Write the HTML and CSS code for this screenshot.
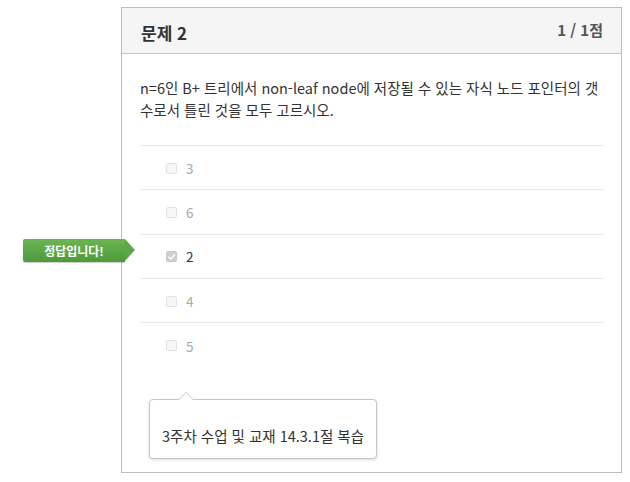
FILE: index.html
```html
<!DOCTYPE html>
<html lang="ko">
<head>
<meta charset="utf-8">
<link rel="stylesheet" href="styles.css">
</head>
<body>
<div class="page">
  <div class="card">
    <div class="card-header">
      <h2 class="title">문제 2</h2>
      <span class="score">1 / 1점</span>
    </div>
    <div class="card-body">
      <p class="question">n=6인 B+ 트리에서 non-leaf node에 저장될 수 있는 자식 노드 포인터의 갯수로서 틀린 것을 모두 고르시오.</p>
      <ul class="options">
        <li class="option"><span class="box"></span><span class="label">3</span></li>
        <li class="option"><span class="box"></span><span class="label">6</span></li>
        <li class="option selected"><span class="box checked"><svg width="10" height="10" viewBox="0 0 10 10"><path d="M2 5.2 L4.2 7.3 L8.2 2.6" fill="none" stroke="#fff" stroke-width="1.6" stroke-linecap="round" stroke-linejoin="round"/></svg></span><span class="label">2</span>
          <div class="badge">정답입니다!</div>
        </li>
        <li class="option"><span class="box"></span><span class="label">4</span></li>
        <li class="option"><span class="box"></span><span class="label">5</span></li>
      </ul>
      <div class="tooltip">3주차 수업 및 교재 14.3.1절 복습</div>
    </div>
  </div>
</div>
</body>
</html>
```

FILE: styles.css
```css
* { box-sizing: border-box; }
html, body { margin: 0; padding: 0; background: #fff; }
body { font-family: "Noto Sans CJK KR", "Noto Sans", sans-serif; color: #333; }
.page { padding: 7px 0 0 121px; width: 630px; height: 482px; }
.card {
  position: relative;
  width: 501px;
  height: 466px;
  border: 1px solid #bdbdbd;
  background: #fff;
}
.card-header {
  height: 46px;
  background: #f5f5f5;
  border-bottom: 1px solid #c4c4c4;
  display: flex;
  align-items: center;
  justify-content: space-between;
  padding: 0 18px 0 19px;
}
.title { margin: 0; font-size: 17px; font-weight: 700; color: #333; line-height: 1; padding-top: 4px; }
.score { font-size: 15px; font-weight: 700; color: #555; line-height: 1; padding-bottom: 3px; }
.card-body { padding: 23px 17px 0 18px; position: relative; }
.question {
  margin: 0;
  font-size: 14.5px;
  line-height: 22px;
  color: #333;
  padding-bottom: 24px;
  border-bottom: 1px solid #e8e8e8;
}
.options { list-style: none; margin: 0; padding: 0; }
.option {
  position: relative;
  height: 44.3px;
  display: flex;
  align-items: center;
  padding-left: 26px;
  padding-top: 1px;
  border-bottom: 1px solid #e8e8e8;
}
.option:last-child { border-bottom: none; }
.box {
  width: 11px; height: 11px;
  border: 1px solid #e2e2e2;
  border-radius: 2px;
  background: #f7f7f7;
  margin-right: 9px;
  display: flex; align-items: center; justify-content: center;
}
.box.checked { background: #cfcfcf; border-color: #c8c8c8; }
.label { font-size: 13.5px; color: #a8a8a8; line-height: 1; padding-top: 1px; }
.selected .label { color: #333; }
.badge {
  position: absolute;
  left: -117px;
  top: 4px;
  height: 23px;
  width: 102px;
  background: linear-gradient(#6cb552, #4d9a3b);
  color: #fff;
  font-size: 12px;
  font-weight: 700;
  display: flex;
  align-items: center;
  justify-content: center;
  border-radius: 2px 0 0 2px;
  box-shadow: 0 1px 1px rgba(0,0,0,0.2);
}
.badge::after {
  content: "";
  position: absolute;
  right: -10px;
  top: 0;
  border-top: 11.5px solid transparent;
  border-bottom: 11.5px solid transparent;
  border-left: 10px solid #5ca847;
}
.tooltip {
  position: absolute;
  left: 27px;
  top: 345px;
  width: 228px;
  height: 60px;
  border: 1px solid #c7c7c7;
  border-radius: 4px;
  background: #fff;
  box-shadow: 0 1px 3px rgba(0,0,0,0.15);
  font-size: 14.5px;
  color: #333;
  padding: 27px 0 0 12px;
  line-height: 18px;
}
.tooltip::before {
  content: "";
  position: absolute;
  left: 28px;
  top: -8px;
  border-left: 8px solid transparent;
  border-right: 8px solid transparent;
  border-bottom: 8px solid #c7c7c7;
}
.tooltip::after {
  content: "";
  position: absolute;
  left: 29px;
  top: -7px;
  border-left: 7px solid transparent;
  border-right: 7px solid transparent;
  border-bottom: 7px solid #fff;
}
```
